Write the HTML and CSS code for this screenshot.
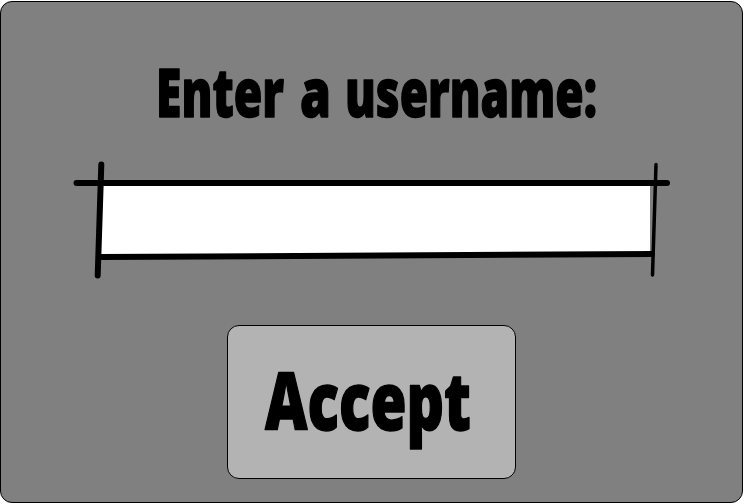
FILE: index.html
```html
<!DOCTYPE html>
<html lang="en">
<head>
<meta charset="utf-8">
<title>Username</title>
<link rel="stylesheet" href="styles.css">
</head>
<body>
<main class="dialog">
  <h1 class="heading">
    <svg class="lettering" width="460" height="80" viewBox="150 50 460 80">
      <text class="title" x="156" y="117" textLength="128" lengthAdjust="spacingAndGlyphs">Enter</text>
      <text class="title" x="300" y="117" textLength="31" lengthAdjust="spacingAndGlyphs">a</text>
      <text class="title" x="345" y="117" textLength="252" lengthAdjust="spacingAndGlyphs">username:</text>
    </svg>
  </h1>
  <div class="field">
    <svg width="604" height="124" viewBox="70 157 604 124" aria-hidden="true">
      <path class="paper" d="M101 183H650V254L101 257Z"/>
      <path class="stroke" d="M76.500 183H667M101.300 164.500L97.700 275.500M100 257L652 254"/>
      <path class="stroke thin" d="M656 164.500L652.500 275"/>
    </svg>
  </div>
  <button class="accept" type="button">
    <svg class="lettering" width="230" height="100" viewBox="255 355 230 100">
      <text class="label" x="263" y="430" textLength="206" lengthAdjust="spacingAndGlyphs">Accept</text>
    </svg>
  </button>
</main>
</body>
</html>
```
FILE: styles.css
```css
* { box-sizing: border-box; }
body { margin: 0; background: #fff; }
.dialog {
  display: flex;
  flex-direction: column;
  align-items: center;
  width: 743px;
  height: 502px;
  margin-top: 1px;
  padding-top: 48px;
  background: #808080;
  border: 1px solid #000;
  border-radius: 12px;
}
.heading { margin: 0 0 27px 17px; height: 80px; }
.lettering { display: block; overflow: visible; }
.lettering text {
  font-family: "Open Sans", sans-serif;
  font-weight: 800;
  stroke: #000;
  stroke-width: 1.500;
  stroke-linejoin: round;
}
.title { font-size: 67px; }
.label { font-size: 80px; }
.field { height: 124px; }
.field svg { display: block; }
.paper { fill: #fff; }
.stroke { fill: none; stroke: #000; stroke-width: 6; stroke-linecap: round; }
.thin { stroke-width: 3.500; }
.accept {
  display: flex;
  justify-content: center;
  width: 289px;
  height: 154px;
  margin-top: 44px;
  padding: 29px 0 0;
  background: #b3b3b3;
  border: 1px solid #000;
  border-radius: 12px;
}
```
